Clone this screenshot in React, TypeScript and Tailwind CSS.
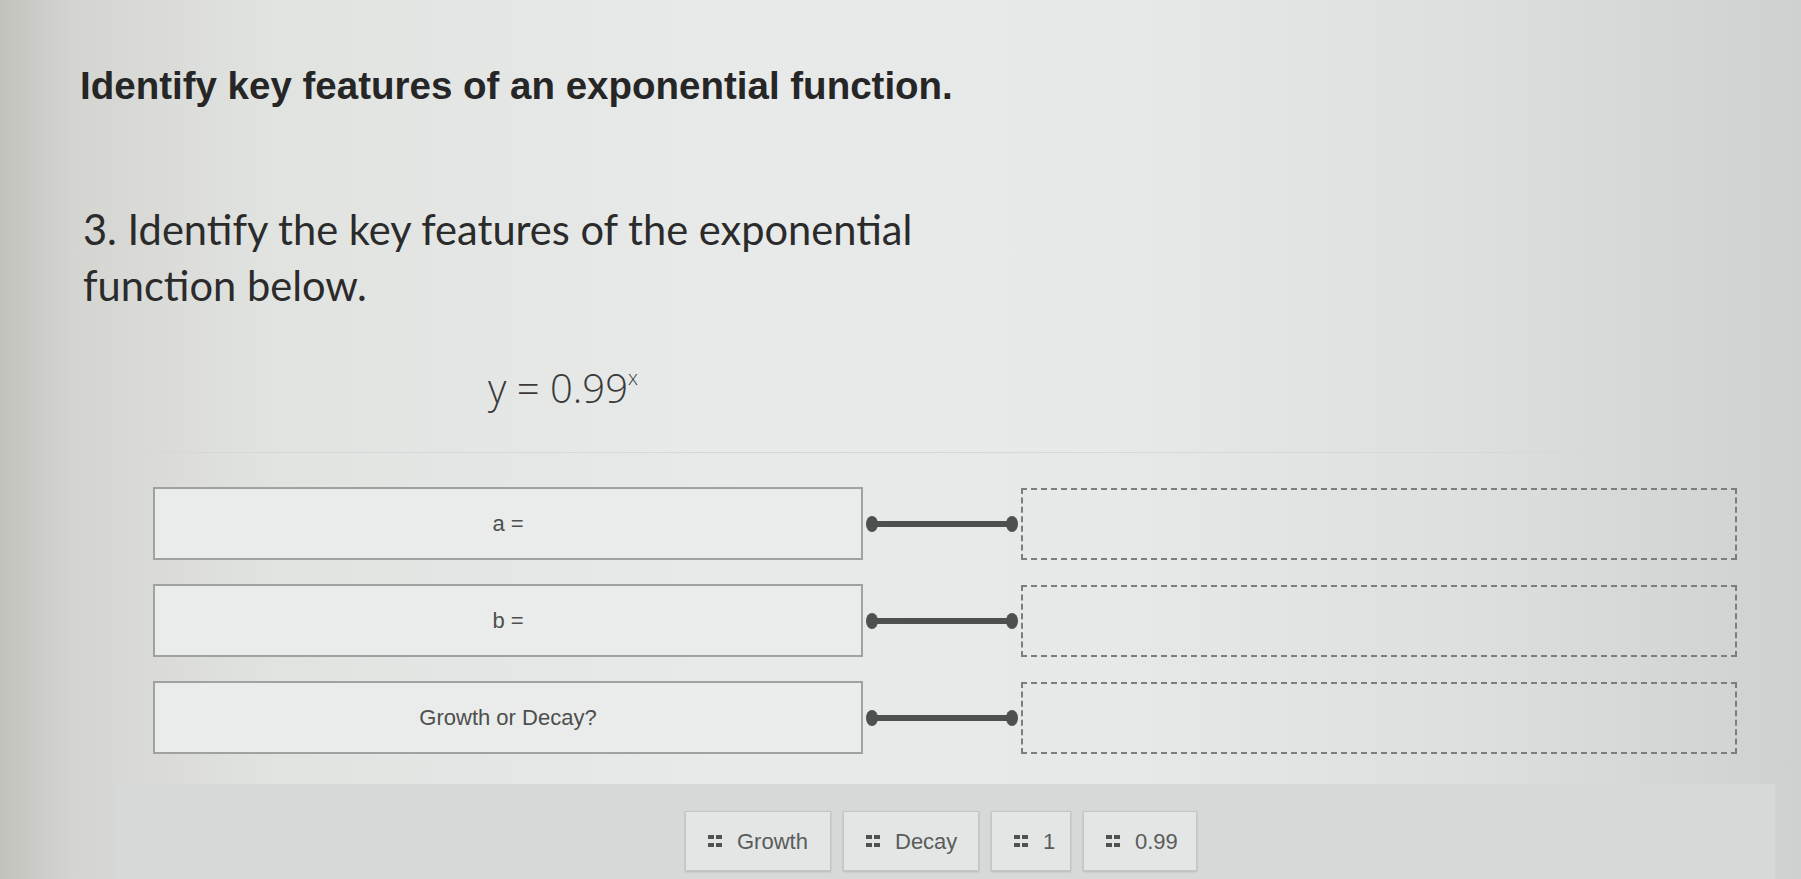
import React from "react";

function Grip() {
  return (
    <svg width="14" height="13" viewBox="0 0 14 13" className="shrink-0">
      <rect x="0" y="0" width="6" height="4" fill="#4f5251" />
      <rect x="8" y="0" width="6" height="4" fill="#4f5251" />
      <rect x="0" y="8" width="6" height="4" fill="#4f5251" />
      <rect x="8" y="8" width="6" height="4" fill="#4f5251" />
    </svg>
  );
}

function Connector() {
  return (
    <div className="w-[158px] h-[18px] shrink-0 flex items-center">
      <svg width="158" height="18" viewBox="0 0 158 18">
        <line x1="9" y1="9" x2="149" y2="9" stroke="#4c5150" strokeWidth="6" />
        <ellipse cx="9" cy="9" rx="6" ry="8" fill="#4c5150" />
        <ellipse cx="149" cy="9" rx="6" ry="8" fill="#4c5150" />
      </svg>
    </div>
  );
}

function Row({ label }: { label: string }) {
  return (
    <div className="flex items-center">
      <div className="w-[710px] h-[73px] shrink-0 border-2 border-[#9fa2a1] bg-[#e9ecea] flex items-center justify-center">
        <span className="text-[22px] text-[#4d4f4e] font-['Liberation_Sans',Arial,sans-serif]">{label}</span>
      </div>
      <Connector />
      <div className="w-[716px] h-[72px] shrink-0 border-2 border-dashed border-[#7b7e7d]" />
    </div>
  );
}

function Tile({ label, w }: { label: string; w: string }) {
  return (
    <div className={`h-[60px] ${w} border border-[#c3c6c5] bg-[#e3e6e5] shadow-[0_1px_2px_rgba(0,0,0,0.15)] flex items-center gap-[15px] pl-[22px] pr-[18px]`}>
      <Grip />
      <span className="text-[22px] text-[#5a5c5b] font-['Liberation_Sans',Arial,sans-serif]">{label}</span>
    </div>
  );
}

export default function App() {
  return (
    <div className="w-[1801px] h-[879px] overflow-hidden flex flex-col bg-[image:linear-gradient(to_right,#c2c2bd_0%,#d4d5d1_4%,#e1e3e1_15%,#e8eae9_40%,#e6e9e8_62%,#dcdfde_82%,#cfd1d0_100%)]">
      <div className="pl-[80px] pt-[63px]">
        <h1 className="text-[38.5px] leading-[46px] font-bold text-[#262626] font-['Liberation_Sans',Arial,sans-serif]">
          Identify key features of an exponential function.
        </h1>
      </div>
      <div className="pl-[83px] mt-[92px] w-[1000px]">
        <p className="text-[41.6px] leading-[56px] text-[#2b2b2b] font-['Lato','Noto_Sans',sans-serif]">
          3. Identify the key features of the exponential
          <br />
          function below.
        </p>
      </div>
      <div className="pl-[488px] mt-[52px]">
        <span className="text-[40px] leading-[46px] text-[#3a3a3a] font-['Open_Sans',sans-serif] font-light whitespace-pre">
          y = 0.99<sup className="text-[20px] relative -top-[18px] align-baseline">x</sup>
        </span>
      </div>
      <div className="ml-[115px] mr-[215px] mt-[41px] border-t border-[#d5d8d6]" />
      <div className="pl-[153px] pt-[34px] flex flex-col gap-[24px]">
        <Row label="a =" />
        <Row label="b =" />
        <Row label="Growth or Decay?" />
      </div>
      <div className="ml-[115px] w-[1660px] mt-[30px] flex-1 bg-[#d6d9d8] flex justify-center gap-[12px] pt-[27px] pr-[8px]">
        <Tile label="Growth" w="w-[146px]" />
        <Tile label="Decay" w="w-[136px]" />
        <Tile label="1" w="w-[80px]" />
        <Tile label="0.99" w="w-[114px]" />
      </div>
    </div>
  );
}
